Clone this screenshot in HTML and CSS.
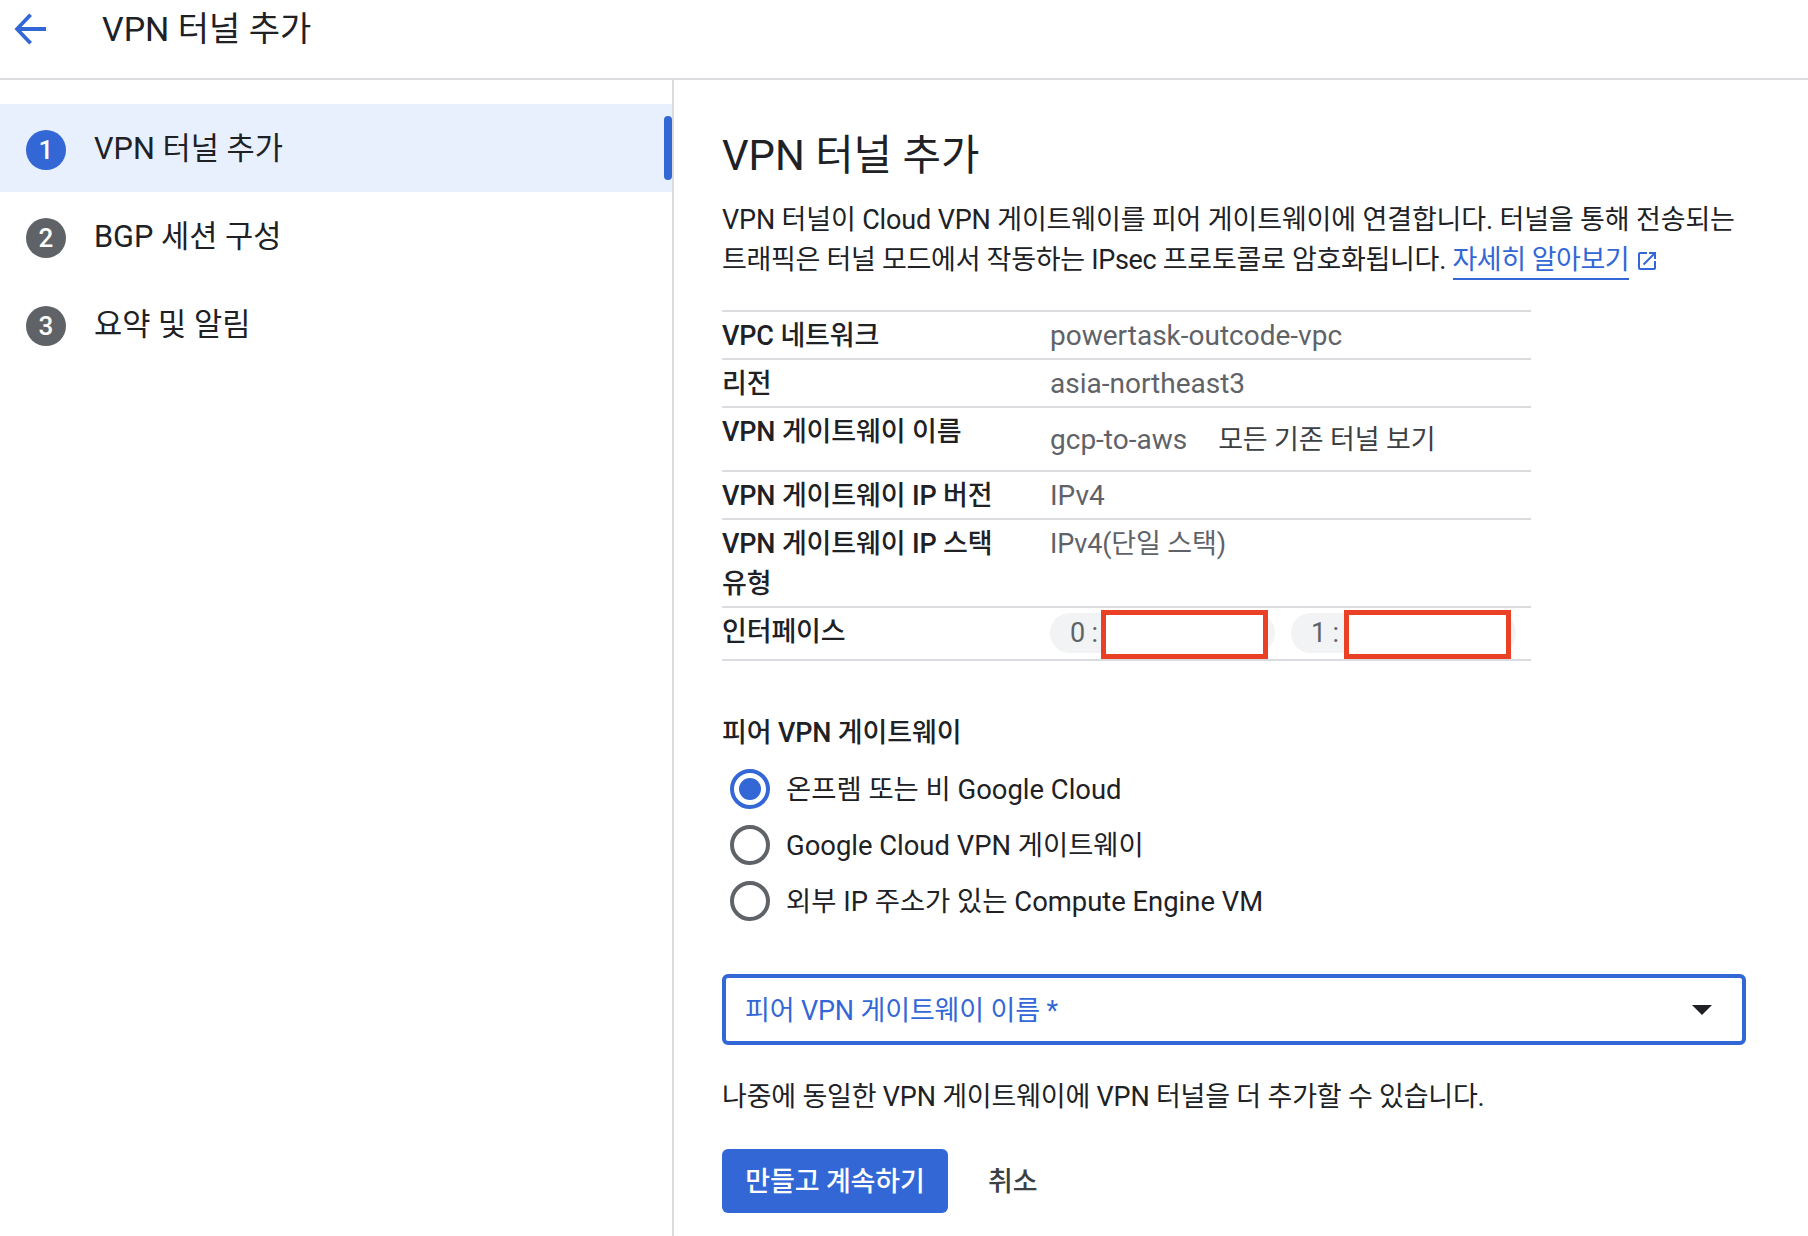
FILE: index.html
```html
<!DOCTYPE html>
<html lang="ko">
<head>
<meta charset="utf-8">
<title>VPN 터널 추가</title>
<link rel="stylesheet" href="styles.css">
</head>
<body>
<header class="topbar">
  <svg class="back" viewBox="0 0 32 32" width="32" height="32"><path d="M32 14H7.4L18 3 15.2 .5 .5 16l14.7 15.5L18 29 7.4 18H32z"/></svg>
  <div class="topbar-title">VPN 터널 추가</div>
</header>
<div class="layout">
  <nav class="steps">
    <div class="step active"><span class="num">1</span><span class="step-label">VPN 터널 추가</span><i class="accent"></i></div>
    <div class="step"><span class="num">2</span><span class="step-label">BGP 세션 구성</span></div>
    <div class="step"><span class="num">3</span><span class="step-label">요약 및 알림</span></div>
  </nav>
  <main class="content">
    <h1>VPN 터널 추가</h1>
    <p class="intro">VPN 터널이 Cloud VPN 게이트웨이를 피어 게이트웨이에 연결합니다. 터널을 통해 전송되는<br><span class="tight">트래픽은 터널 모드에서 작동하는 IPsec 프로토콜로 암호화됩니다.</span> <a class="link" href="#">자세히 알아보기</a><svg class="ext" viewBox="0 0 24 24" width="24" height="24"><path d="M19 19H5V5h7V3H5a2 2 0 0 0-2 2v14a2 2 0 0 0 2 2h14a2 2 0 0 0 2-2v-7h-2zM14 3v2h3.6l-9.8 9.8 1.4 1.4L19 6.4V10h2V3z"/></svg></p>
    <div class="info">
      <div class="row r48"><div class="k">VPC 네트워크</div><div class="v latin">powertask-outcode-vpc</div></div>
      <div class="row r48"><div class="k">리전</div><div class="v latin">asia-northeast3</div></div>
      <div class="row r64"><div class="k">VPN 게이트웨이 이름</div><div class="v v-low"><span class="latin">gcp-to-aws</span><span class="all">모든 기존 터널 보기</span></div></div>
      <div class="row r48"><div class="k">VPN 게이트웨이 IP 버전</div><div class="v latin">IPv4</div></div>
      <div class="row r88"><div class="k">VPN 게이트웨이 IP 스택<br>유형</div><div class="v">IPv4(단일 스택)</div></div>
      <div class="row r53"><div class="k">인터페이스</div>
        <div class="v chips">
          <span class="chip">0 :<i class="redact"></i></span>
          <span class="chip">1 :<i class="redact"></i></span>
        </div>
      </div>
    </div>
    <div class="peer-label">피어 VPN 게이트웨이</div>
    <div class="radios">
      <div class="radio on"><span class="dot"></span><span class="radio-label">온프렘 또는 비 Google Cloud</span></div>
      <div class="radio"><span class="dot"></span><span class="radio-label">Google Cloud VPN 게이트웨이</span></div>
      <div class="radio"><span class="dot"></span><span class="radio-label">외부 IP 주소가 있는 Compute Engine VM</span></div>
    </div>
    <div class="select"><span class="select-label">피어 VPN 게이트웨이 이름 *</span><i class="caret"></i></div>
    <p class="hint">나중에 동일한 VPN 게이트웨이에 VPN 터널을 더 추가할 수 있습니다.</p>
    <div class="actions">
      <button class="primary">만들고 계속하기</button>
      <button class="ghost">취소</button>
    </div>
  </main>
</div>
</body>
</html>
```
FILE: styles.css
```css
* { box-sizing: border-box; }
html, body { margin: 0; height: 100%; }
body {
  width: 1808px; height: 1236px; overflow: hidden; background: #fff;
  color: #202124; font-family: Roboto, "Noto Sans CJK KR", sans-serif; font-size: 27px; letter-spacing: -0.15px;
}
.topbar { height: 80px; display: flex; align-items: flex-start; border-bottom: 2px solid #dadce0; padding: 13px 0 0 14px; }
.back { fill: #3367d6; flex: none; }
.topbar-title { margin-left: 56px; font-size: 34px; line-height: 32px; letter-spacing: 0; }
.layout { display: flex; height: 1156px; }
.steps { width: 674px; flex: none; border-right: 2px solid #dadce0; padding-top: 24px; }
.step { position: relative; height: 88px; display: flex; align-items: center; font-size: 30.7px; letter-spacing: 0; padding-left: 26px; gap: 28px; }
.step-label { margin-bottom: 6px; }
.step.active { background: #e8f0fe; }
.num { width: 40px; height: 40px; margin-top: 4px; border-radius: 50%; background: #5f6368; color: #fff; font-size: 26px; font-weight: 500; display: flex; align-items: center; justify-content: center; flex: none; }
.active .num { background: #3367d6; }
.accent { position: absolute; right: 0; top: 12px; width: 8px; height: 64px; background: #3367d6; border-radius: 4px; }
.content { padding: 50px 0 0 48px; flex: 1; }
h1 { margin: 0; font-size: 41.8px; font-weight: 400; line-height: 52px; letter-spacing: 0; }
.intro { margin: 18px 0 0; width: 1040px; line-height: 40px; }
.tight { letter-spacing: -0.3px; }
.link { color: #3367d6; text-decoration: none; border-bottom: 2px solid #3367d6; padding-bottom: 2px; letter-spacing: -0.5px; }
.ext { fill: #3367d6; width: 24px; height: 24px; vertical-align: -4px; margin-left: 6px; }
.info { margin-top: 30px; width: 809px; border-top: 2px solid #dadce0; }
.row { display: grid; grid-template-columns: 328px 1fr; border-bottom: 2px solid #dadce0; }
.r48 { height: 48px; } .r64 { height: 64px; } .r88 { height: 88px; } .r53 { height: 53px; }
.k { font-weight: 500; line-height: 40px; padding-top: 4px; }
.v { color: #5f6368; line-height: 44px; padding-top: 2px; }
.latin { font-size: 28px; letter-spacing: 0; }
.v-low { padding-top: 10px; }
.all { color: #3c4043; margin-left: 31px; }
.chips { display: flex; gap: 16px; align-items: flex-start; padding-top: 5px; }
.chip { position: relative; width: 225px; height: 40px; border-radius: 20px; background: #f1f3f4; padding-left: 20px; line-height: 40px; flex: none; }
.redact { position: absolute; left: 51px; top: -3px; width: 167px; height: 49px; background: #fff; border: 5px solid #ea4025; }
.chip:last-child .redact { left: 53px; }
.peer-label { margin-top: 52px; font-weight: 500; line-height: 40px; }
.radios { margin-top: 8px; }
.radio { height: 56px; display: flex; align-items: center; padding-left: 8px; gap: 16px; }
.radio-label { margin-bottom: 4px; font-size: 27.4px; letter-spacing: 0; }
.dot { width: 40px; height: 40px; border-radius: 50%; border: 4px solid #5f6368; position: relative; flex: none; }
.on .dot { border-color: #3367d6; }
.on .dot::after { content: ""; position: absolute; inset: 5px; border-radius: 50%; background: #3367d6; }
.select { margin-top: 45px; width: 1024px; height: 71px; border: 4px solid #3367d6; border-radius: 6px; display: flex; align-items: center; justify-content: space-between; padding: 0 30px 0 19px; color: #3367d6; }
.select-label { margin-bottom: 2px; }
.caret { width: 0; height: 0; border-left: 10px solid transparent; border-right: 10px solid transparent; border-top: 10px solid #202124; }
.hint { margin: 32px 0 0; line-height: 40px; letter-spacing: -0.2px; }
.actions { margin-top: 32px; display: flex; align-items: center; gap: 40px; }
.primary { width: 226px; height: 64px; padding: 0 0 4px; background: #3367d6; color: #fff; border: 0; border-radius: 6px; font: 500 27px Roboto, "Noto Sans CJK KR", sans-serif; letter-spacing: -0.15px; }
.ghost { background: none; border: 0; padding: 0 0 4px; color: #3c4043; font: 500 27px Roboto, "Noto Sans CJK KR", sans-serif; letter-spacing: -0.15px; }
```
